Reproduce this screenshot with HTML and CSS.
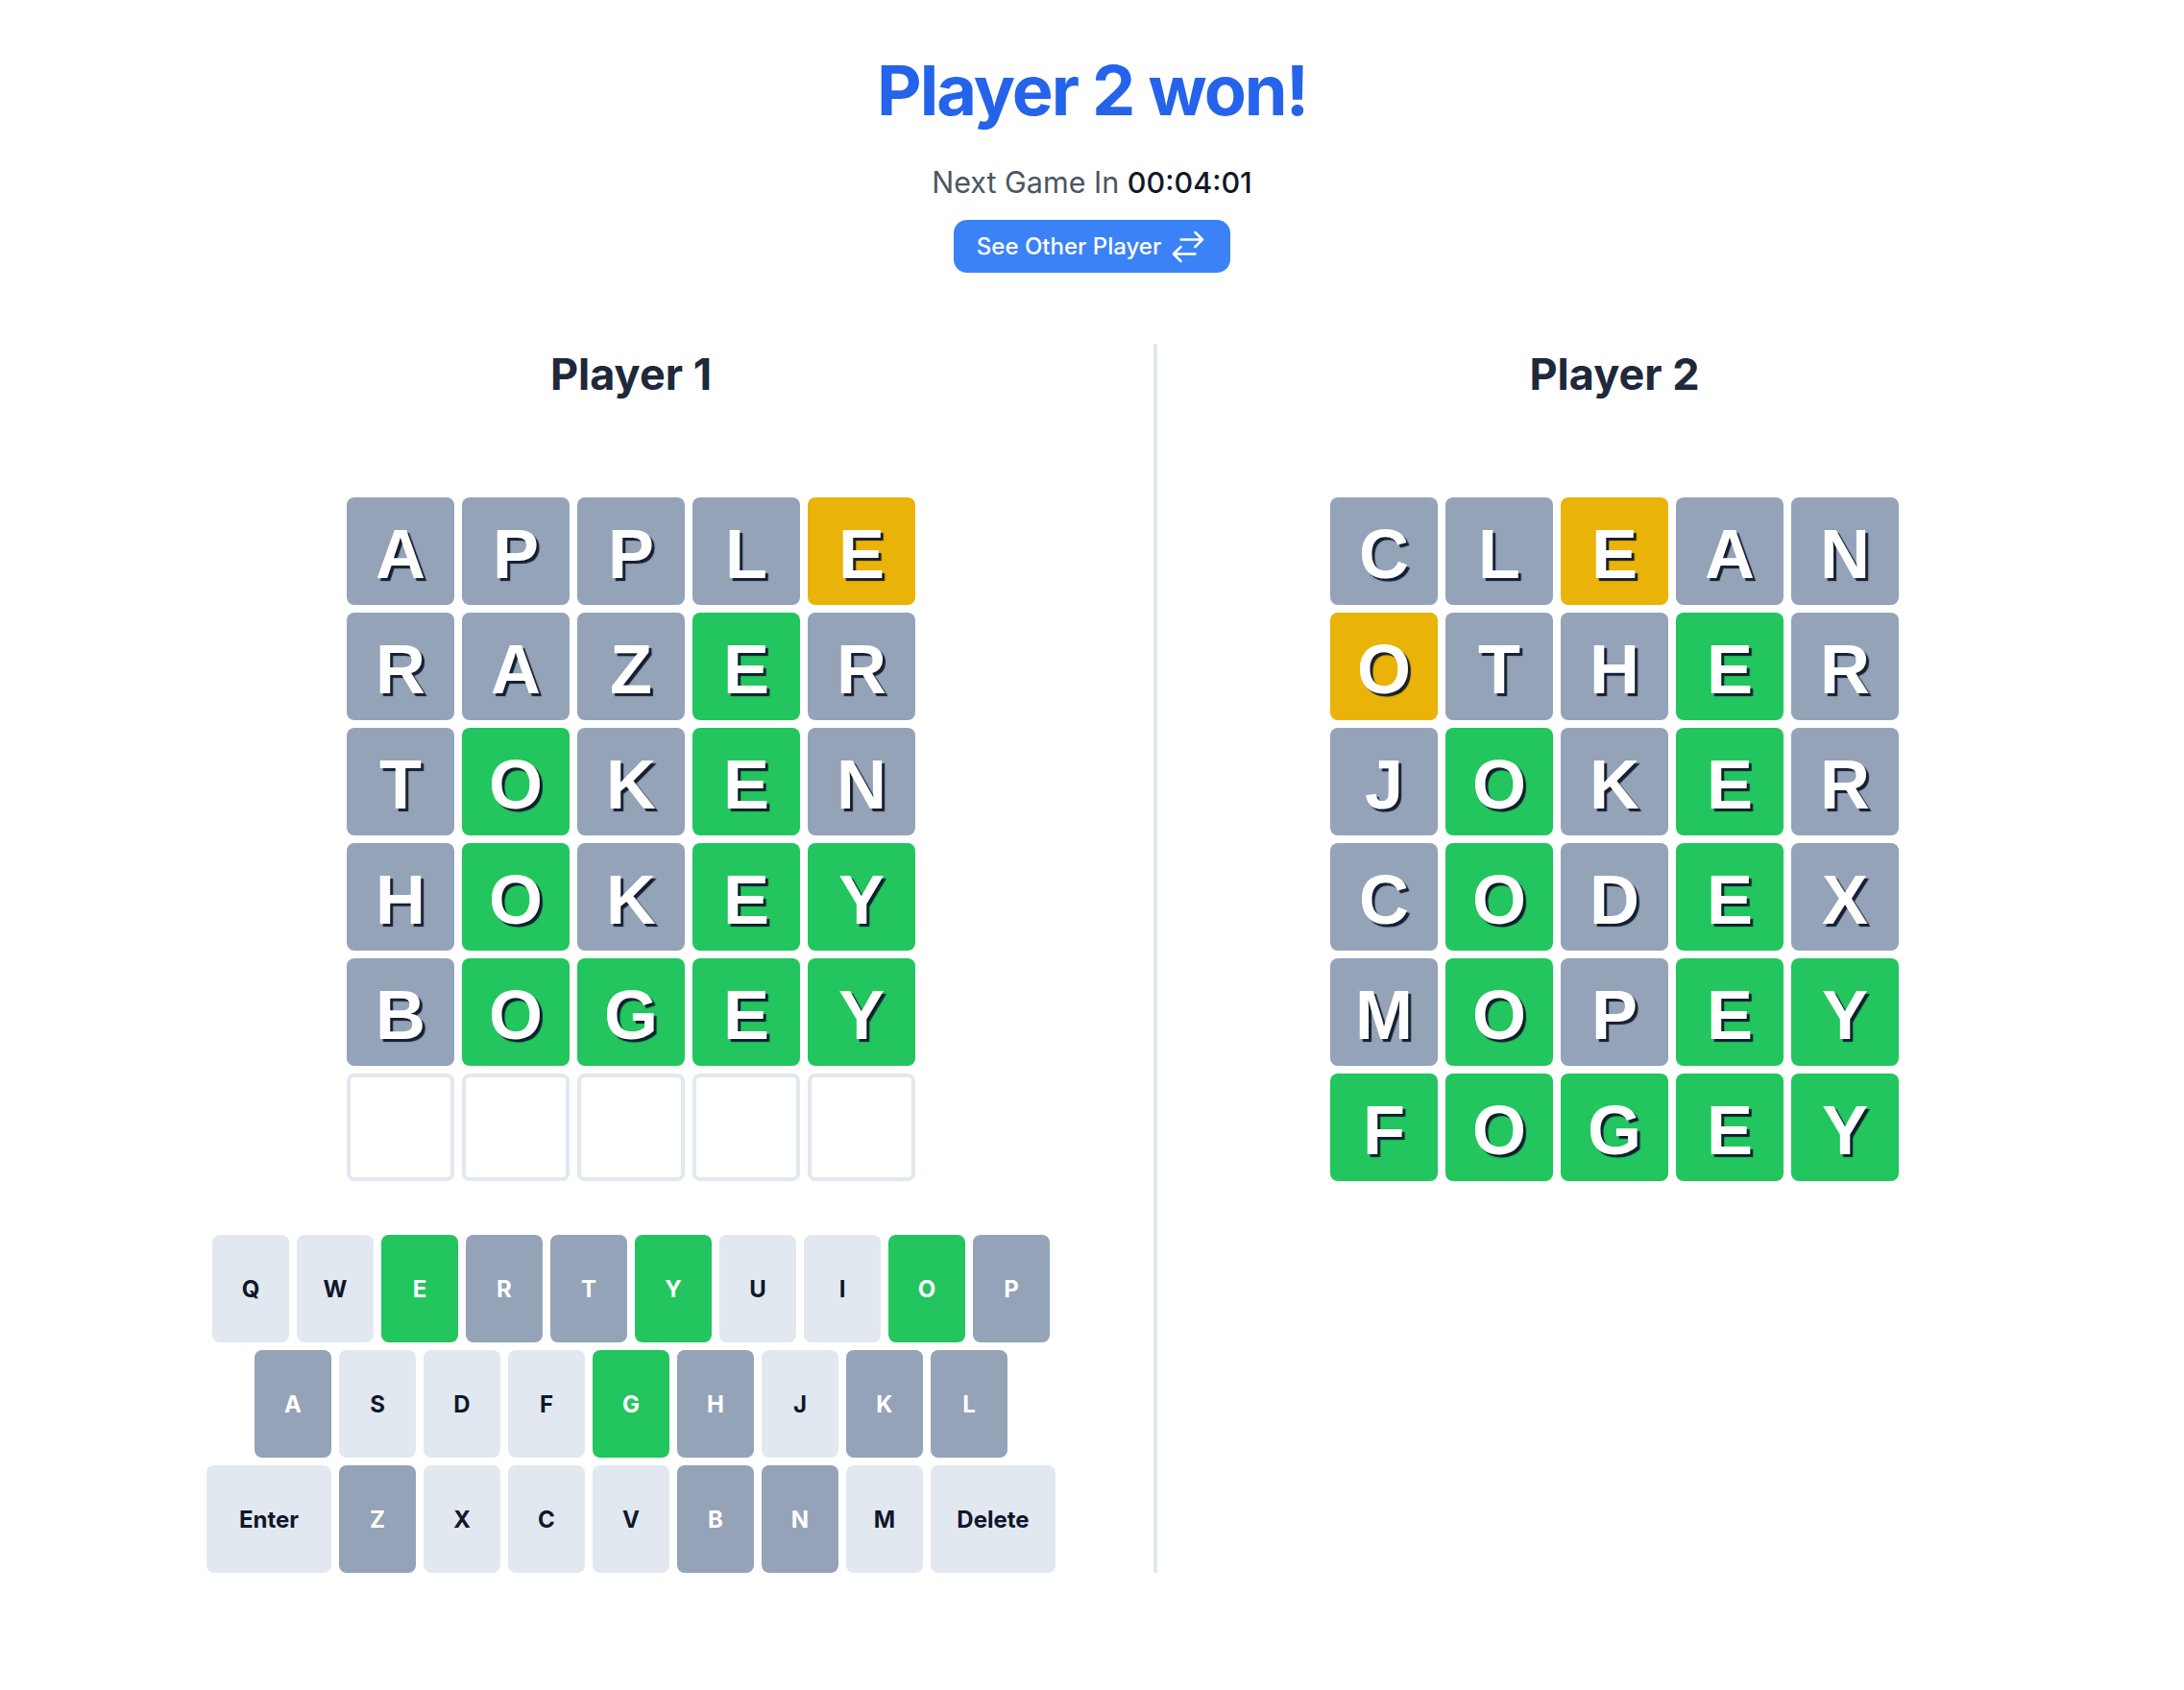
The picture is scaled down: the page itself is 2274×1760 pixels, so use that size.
FILE: index.html
```html
<!DOCTYPE html>
<html lang="en">
<head>
    <title>Wordle Duel</title>
    <link rel="stylesheet" href="styles.css">
</head>
<body>
    <div class="result">
        <h1 class="title">Player 2 won!</h1>
        <p class="next-game">Next Game In <span class="countdown">00:04:01</span></p>
        <button class="swap-btn">
            See Other Player
            <svg class="swap-icon" viewBox="0 0 24 24" fill="none" stroke="currentColor" stroke-width="1.5" stroke-linecap="round" stroke-linejoin="round">
                <path d="M7.5 21 3 16.5m0 0L7.5 12M3 16.5h13.5m0-13.5L21 7.5m0 0L16.5 12M21 7.5H7.5"/>
            </svg>
        </button>
    </div>

    <div class="board">
        <div class="player player-left">
            <h2 class="player-name">Player 1</h2>
            <div class="grid">
                <div class="tile absent">A</div>
                <div class="tile absent">P</div>
                <div class="tile absent">P</div>
                <div class="tile absent">L</div>
                <div class="tile present">E</div>

                <div class="tile absent">R</div>
                <div class="tile absent">A</div>
                <div class="tile absent">Z</div>
                <div class="tile correct">E</div>
                <div class="tile absent">R</div>

                <div class="tile absent">T</div>
                <div class="tile correct">O</div>
                <div class="tile absent">K</div>
                <div class="tile correct">E</div>
                <div class="tile absent">N</div>

                <div class="tile absent">H</div>
                <div class="tile correct">O</div>
                <div class="tile absent">K</div>
                <div class="tile correct">E</div>
                <div class="tile correct">Y</div>

                <div class="tile absent">B</div>
                <div class="tile correct">O</div>
                <div class="tile correct">G</div>
                <div class="tile correct">E</div>
                <div class="tile correct">Y</div>

                <div class="tile empty"></div>
                <div class="tile empty"></div>
                <div class="tile empty"></div>
                <div class="tile empty"></div>
                <div class="tile empty"></div>
            </div>

            <div class="keyboard">
                <div class="key-row">
                    <div class="key">Q</div>
                    <div class="key">W</div>
                    <div class="key correct">E</div>
                    <div class="key absent">R</div>
                    <div class="key absent">T</div>
                    <div class="key correct">Y</div>
                    <div class="key">U</div>
                    <div class="key">I</div>
                    <div class="key correct">O</div>
                    <div class="key absent">P</div>
                </div>
                <div class="key-row">
                    <div class="key absent">A</div>
                    <div class="key">S</div>
                    <div class="key">D</div>
                    <div class="key">F</div>
                    <div class="key correct">G</div>
                    <div class="key absent">H</div>
                    <div class="key">J</div>
                    <div class="key absent">K</div>
                    <div class="key absent">L</div>
                </div>
                <div class="key-row">
                    <div class="key wide">Enter</div>
                    <div class="key absent">Z</div>
                    <div class="key">X</div>
                    <div class="key">C</div>
                    <div class="key">V</div>
                    <div class="key absent">B</div>
                    <div class="key absent">N</div>
                    <div class="key">M</div>
                    <div class="key wide">Delete</div>
                </div>
            </div>
        </div>

        <div class="divider"></div>

        <div class="player player-right">
            <h2 class="player-name">Player 2</h2>
            <div class="grid">
                <div class="tile absent">C</div>
                <div class="tile absent">L</div>
                <div class="tile present">E</div>
                <div class="tile absent">A</div>
                <div class="tile absent">N</div>

                <div class="tile present">O</div>
                <div class="tile absent">T</div>
                <div class="tile absent">H</div>
                <div class="tile correct">E</div>
                <div class="tile absent">R</div>

                <div class="tile absent">J</div>
                <div class="tile correct">O</div>
                <div class="tile absent">K</div>
                <div class="tile correct">E</div>
                <div class="tile absent">R</div>

                <div class="tile absent">C</div>
                <div class="tile correct">O</div>
                <div class="tile absent">D</div>
                <div class="tile correct">E</div>
                <div class="tile absent">X</div>

                <div class="tile absent">M</div>
                <div class="tile correct">O</div>
                <div class="tile absent">P</div>
                <div class="tile correct">E</div>
                <div class="tile correct">Y</div>

                <div class="tile correct">F</div>
                <div class="tile correct">O</div>
                <div class="tile correct">G</div>
                <div class="tile correct">E</div>
                <div class="tile correct">Y</div>
            </div>
        </div>
    </div>
</body>
</html>
```

FILE: styles.css
```css
body {
    margin: 0;
    font-family: Inter, "Noto Sans", sans-serif;
    background-color: #ffffff;
}
.result {
    display: flex;
    flex-direction: column;
    align-items: center;
    padding-top: 58px;
}
.title {
    margin: 0;
    font-size: 72px;
    line-height: 72px;
    font-weight: 700;
    letter-spacing: -2px;
    color: #2563eb;
}
.next-game {
    margin: 40px 0 0;
    font-size: 30.5px;
    line-height: 40px;
    color: #4b5563;
}
.countdown {
    font-weight: 500;
    color: #111827;
}
.swap-btn {
    display: flex;
    align-items: center;
    gap: 8px;
    height: 55px;
    margin-top: 19px;
    padding: 0 24px;
    border: none;
    border-radius: 14px;
    background-color: #3b82f6;
    color: #ffffff;
    font-family: Inter, sans-serif;
    font-size: 24px;
    font-weight: 500;
    cursor: pointer;
}
.swap-icon {
    width: 40px;
    height: 40px;
}
.board {
    display: flex;
    margin-top: 74px;
    padding-left: 113px;
}
.player {
    display: flex;
    flex-direction: column;
    align-items: center;
}
.player-left {
    width: 1088px;
}
.player-right {
    width: 952px;
}
.divider {
    width: 4px;
    background-color: #e2e8f0;
}
.player-name {
    margin: 0;
    font-size: 45px;
    line-height: 64px;
    font-weight: 700;
    color: #1e293b;
}
.grid {
    display: grid;
    grid-template-columns: repeat(5, 112px);
    grid-auto-rows: 112px;
    gap: 8px;
    margin-top: 96px;
}
.tile {
    display: flex;
    align-items: center;
    justify-content: center;
    box-sizing: border-box;
    padding-top: 5px;
    border-radius: 8px;
    font-family: "Liberation Sans", Arial, sans-serif;
    font-size: 72px;
    font-weight: 700;
    color: #ffffff;
    text-shadow: 3px 3px 1px rgba(15, 23, 42, 0.95);
}
.tile.empty {
    border: 4px solid #e2e8f0;
    background-color: #ffffff;
}
.absent {
    background-color: #94a3b8;
}
.present {
    background-color: #eab308;
}
.correct {
    background-color: #22c55e;
}
.keyboard {
    display: flex;
    flex-direction: column;
    align-items: center;
    gap: 8px;
    margin-top: 56px;
}
.key-row {
    display: flex;
    gap: 8px;
}
.key {
    display: flex;
    align-items: center;
    justify-content: center;
    width: 80px;
    height: 112px;
    border-radius: 8px;
    background-color: #e2e8f0;
    color: #0f172a;
    font-size: 24px;
    font-weight: 700;
}
.key.wide {
    width: 130px;
}
.key.absent {
    background-color: #94a3b8;
    color: #ffffff;
}
.key.correct {
    background-color: #22c55e;
    color: #ffffff;
}
```
